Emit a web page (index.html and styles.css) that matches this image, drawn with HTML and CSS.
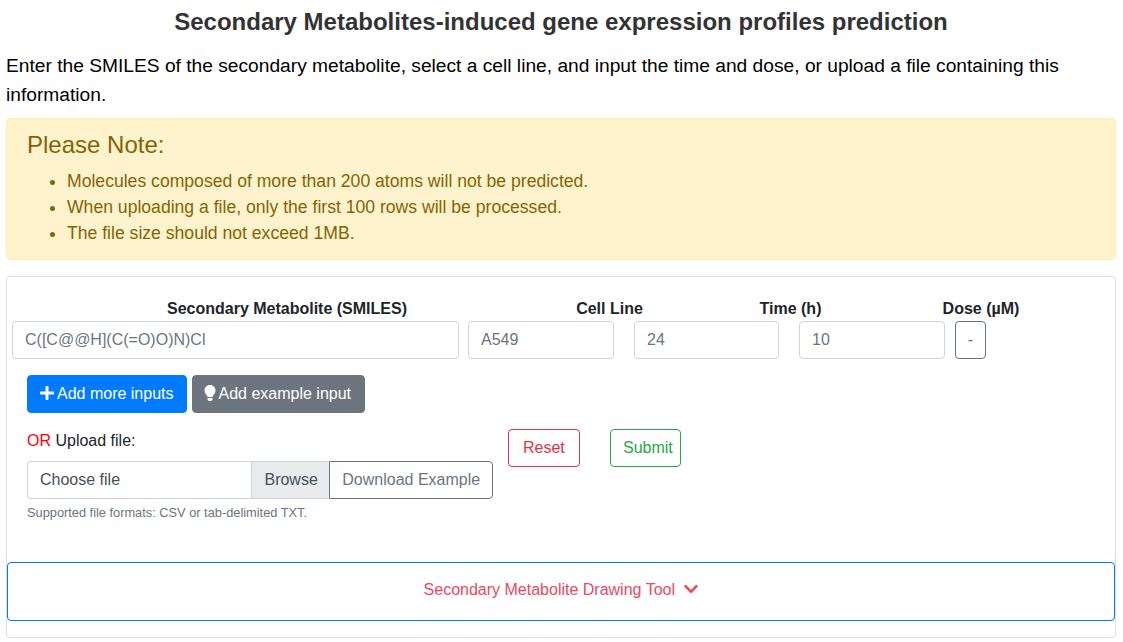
FILE: index.html
```html
<!DOCTYPE html>
<html lang="en">
<head>
    <meta charset="UTF-8">
    <meta name="viewport" content="width=device-width, initial-scale=1.0">
    <title>Secondary Metabolites-induced gene expression profiles prediction</title>
    <link rel="stylesheet" href="styles.css">
</head>
<body>

    <div class="container">
        <h2 class="page-title">Secondary Metabolites-induced gene expression profiles prediction</h2>
        <p class="intro">Enter the SMILES of the secondary metabolite, select a cell line, and input the time and dose, or upload a file containing this information.</p>

        <div class="alert">
            <h4>Please Note:</h4>
            <ul>
                <li>Molecules composed of more than 200 atoms will not be predicted.</li>
                <li>When uploading a file, only the first 100 rows will be processed.</li>
                <li>The file size should not exceed 1MB.</li>
            </ul>
        </div>

        <div class="card">
            <form id="predictForm">
                <div class="label-row">
                    <label for="smiles">Secondary Metabolite (SMILES)</label>
                    <label for="cell">Cell Line</label>
                    <label for="time">Time (h)</label>
                    <label for="dose">Dose (µM)</label>
                </div>
                <div class="input-row">
                    <input type="text" id="smiles" class="form-control smiles-input" placeholder="C([C@@H](C(=O)O)N)Cl">
                    <input type="text" id="cell" class="form-control cell-input" placeholder="A549">
                    <input type="text" id="time" class="form-control time-input" placeholder="24">
                    <input type="text" id="dose" class="form-control dose-input" placeholder="10">
                    <button type="button" class="btn btn-remove">-</button>
                </div>
                <div class="add-row">
                    <button type="button" class="btn btn-primary">
                        <svg class="icon" viewBox="0 0 448 512"><path fill="currentColor" d="M416 208H272V64c0-17.700-14.300-32-32-32h-32c-17.700 0-32 14.300-32 32v144H32c-17.700 0-32 14.300-32 32v32c0 17.700 14.300 32 32 32h144v144c0 17.700 14.300 32 32 32h32c17.700 0 32-14.300 32-32V304h144c17.700 0 32-14.300 32-32v-32c0-17.700-14.300-32-32-32z"/></svg>Add more inputs
                    </button>
                    <button type="button" class="btn btn-secondary">
                        <svg class="icon bulb" viewBox="0 0 352 512"><path fill="currentColor" d="M96 454c0 6 2 12 5 18l17 26c5 8 15 14 27 14h62c12 0 22-6 27-14l17-26c3-6 5-10 5-18v-38H96zM176 0C74 0 0 82 0 176c0 44 16 85 44 116 17 19 43 59 53 92h158c10-33 36-73 53-92 28-31 44-72 44-116C352 79 273 0 176 0z"/></svg>Add example input
                    </button>
                </div>
                <div class="upload-row">
                    <div class="upload-col">
                        <div class="upload-label"><span class="or">OR</span> Upload file:</div>
                        <div class="file-group">
                            <div class="file-name">Choose file</div>
                            <div class="file-browse">Browse</div>
                            <button type="button" class="btn btn-download">Download Example</button>
                        </div>
                        <small class="help">Supported file formats: CSV or tab-delimited TXT.</small>
                    </div>
                    <div class="submit-col">
                        <button type="reset" class="btn btn-reset">Reset</button>
                        <button type="button" class="btn btn-submit">Submit</button>
                    </div>
                </div>
            </form>
            <div class="draw-toggle">
                Secondary Metabolite Drawing Tool
                <svg class="chevron" viewBox="0 0 448 512"><path fill="currentColor" d="M207 381L13 187c-9-9-9-24 0-34l23-22c9-10 24-10 34 0l154 153 154-153c10-10 25-10 34 0l23 22c9 10 9 25 0 34L241 381c-9 9-25 9-34 0z"/></svg>
            </div>
        </div>
    </div>

</body>
</html>
```

FILE: styles.css
```css
* {
    box-sizing: border-box;
}
body {
    margin: 0;
    font-family: "Liberation Sans", Arial, sans-serif;
    font-size: 16px;
    line-height: 1.5;
    color: #212529;
    background-color: #fff;
}
.container {
    padding: 0 7px 0 6px;
}
.page-title {
    margin: 0;
    padding-top: 5px;
    height: 51px;
    font-size: 24px;
    line-height: 33px;
    font-weight: 700;
    text-align: center;
    color: #333;
}
.intro {
    margin: 0 0 9px;
    font-size: 19.2px;
    line-height: 29px;
    color: #000;
}
.alert {
    height: 142px;
    margin-bottom: 16px;
    padding: 11px 20px;
    background-color: #fff3cd;
    border: 1px solid #ffeeba;
    border-radius: 4px;
    color: #856404;
}
.alert h4 {
    margin: 0 0 9px;
    font-size: 24px;
    line-height: 29px;
    font-weight: 400;
}
.alert ul {
    margin: 0;
    padding-left: 40px;
}
.alert li {
    font-size: 17.6px;
    line-height: 26px;
}
.card {
    height: 362px;
    padding-top: 21px;
    border: 1px solid #dfdfdf;
    border-radius: 4px;
}
.label-row {
    display: grid;
    grid-template-columns: 560px 85px 277px 104px;
    height: 23px;
    font-weight: 700;
    line-height: 21px;
    text-align: center;
    color: #212529;
}
.input-row {
    display: flex;
    margin-left: 5px;
}
.form-control {
    height: 38px;
    padding: 6px 12px;
    font: inherit;
    color: #495057;
    background-color: #fff;
    border: 1px solid #ced4da;
    border-radius: 4px;
}
.form-control::placeholder {
    color: #6c757d;
    opacity: 1;
}
.smiles-input {
    width: 447px;
    margin-right: 9px;
}
.cell-input {
    width: 146px;
    margin-right: 20px;
}
.time-input {
    width: 145px;
    margin-right: 20px;
}
.dose-input {
    width: 146px;
    margin-right: 10px;
}
.btn {
    height: 38px;
    padding: 6px 12px;
    font: inherit;
    border: 1px solid transparent;
    border-radius: 4px;
    background: none;
    cursor: pointer;
}
.btn-remove {
    width: 31px;
    padding: 6px 0;
    color: #6c757d;
    border-color: #6c757d;
}
.add-row {
    display: flex;
    gap: 5px;
    margin: 16px 0 0 20px;
}
.btn-primary {
    color: #fff;
    background-color: #007bff;
    border-color: #007bff;
}
.btn-secondary {
    width: 173px;
    padding: 6px 0 6px 11px;
    text-align: left;
    white-space: nowrap;
    color: #fff;
    background-color: #6c757d;
    border-color: #6c757d;
}
.icon {
    width: 14px;
    height: 16px;
    margin-right: 3px;
    vertical-align: -2px;
}
.bulb {
    width: 12px;
    margin-right: 3px;
}
.upload-row {
    display: flex;
    margin: 16px 0 0 20px;
}
.upload-col {
    width: 466px;
}
.upload-label {
    height: 32px;
    line-height: 24px;
    color: #212529;
}
.or {
    color: red;
}
.file-group {
    display: flex;
    height: 38px;
}
.file-name {
    width: 225px;
    padding: 6px 12px;
    color: #495057;
    border: 1px solid #ced4da;
    border-right: 0;
    border-radius: 4px 0 0 4px;
}
.file-browse {
    width: 78px;
    padding: 6px 12px;
    color: #495057;
    background-color: #e9ecef;
    border: 1px solid #ced4da;
    border-right: 0;
}
.btn-download {
    width: 164px;
    padding: 6px 0;
    color: #6c757d;
    border-color: #6c757d;
    border-radius: 0 4px 4px 0;
    white-space: nowrap;
}
.help {
    display: block;
    margin-top: 5px;
    font-size: 12.8px;
    line-height: 18px;
    color: #6c757d;
}
.submit-col {
    display: flex;
    gap: 30px;
    margin-left: 15px;
}
.btn-reset {
    width: 72px;
    padding: 6px 0 6px 14px;
    text-align: left;
    color: #dc3545;
    border-color: #dc3545;
}
.btn-submit {
    width: 71px;
    padding: 6px 0 6px 12px;
    text-align: left;
    color: #28a745;
    border-color: #28a745;
}
.draw-toggle {
    height: 59px;
    margin-top: 40px;
    padding-top: 15px;
    line-height: 24px;
    text-align: center;
    color: #e8495f;
    border: 1px solid #007bff;
    border-radius: 4px;
}
.chevron {
    width: 14px;
    height: 16px;
    margin-left: 5px;
    vertical-align: -2px;
}
```
